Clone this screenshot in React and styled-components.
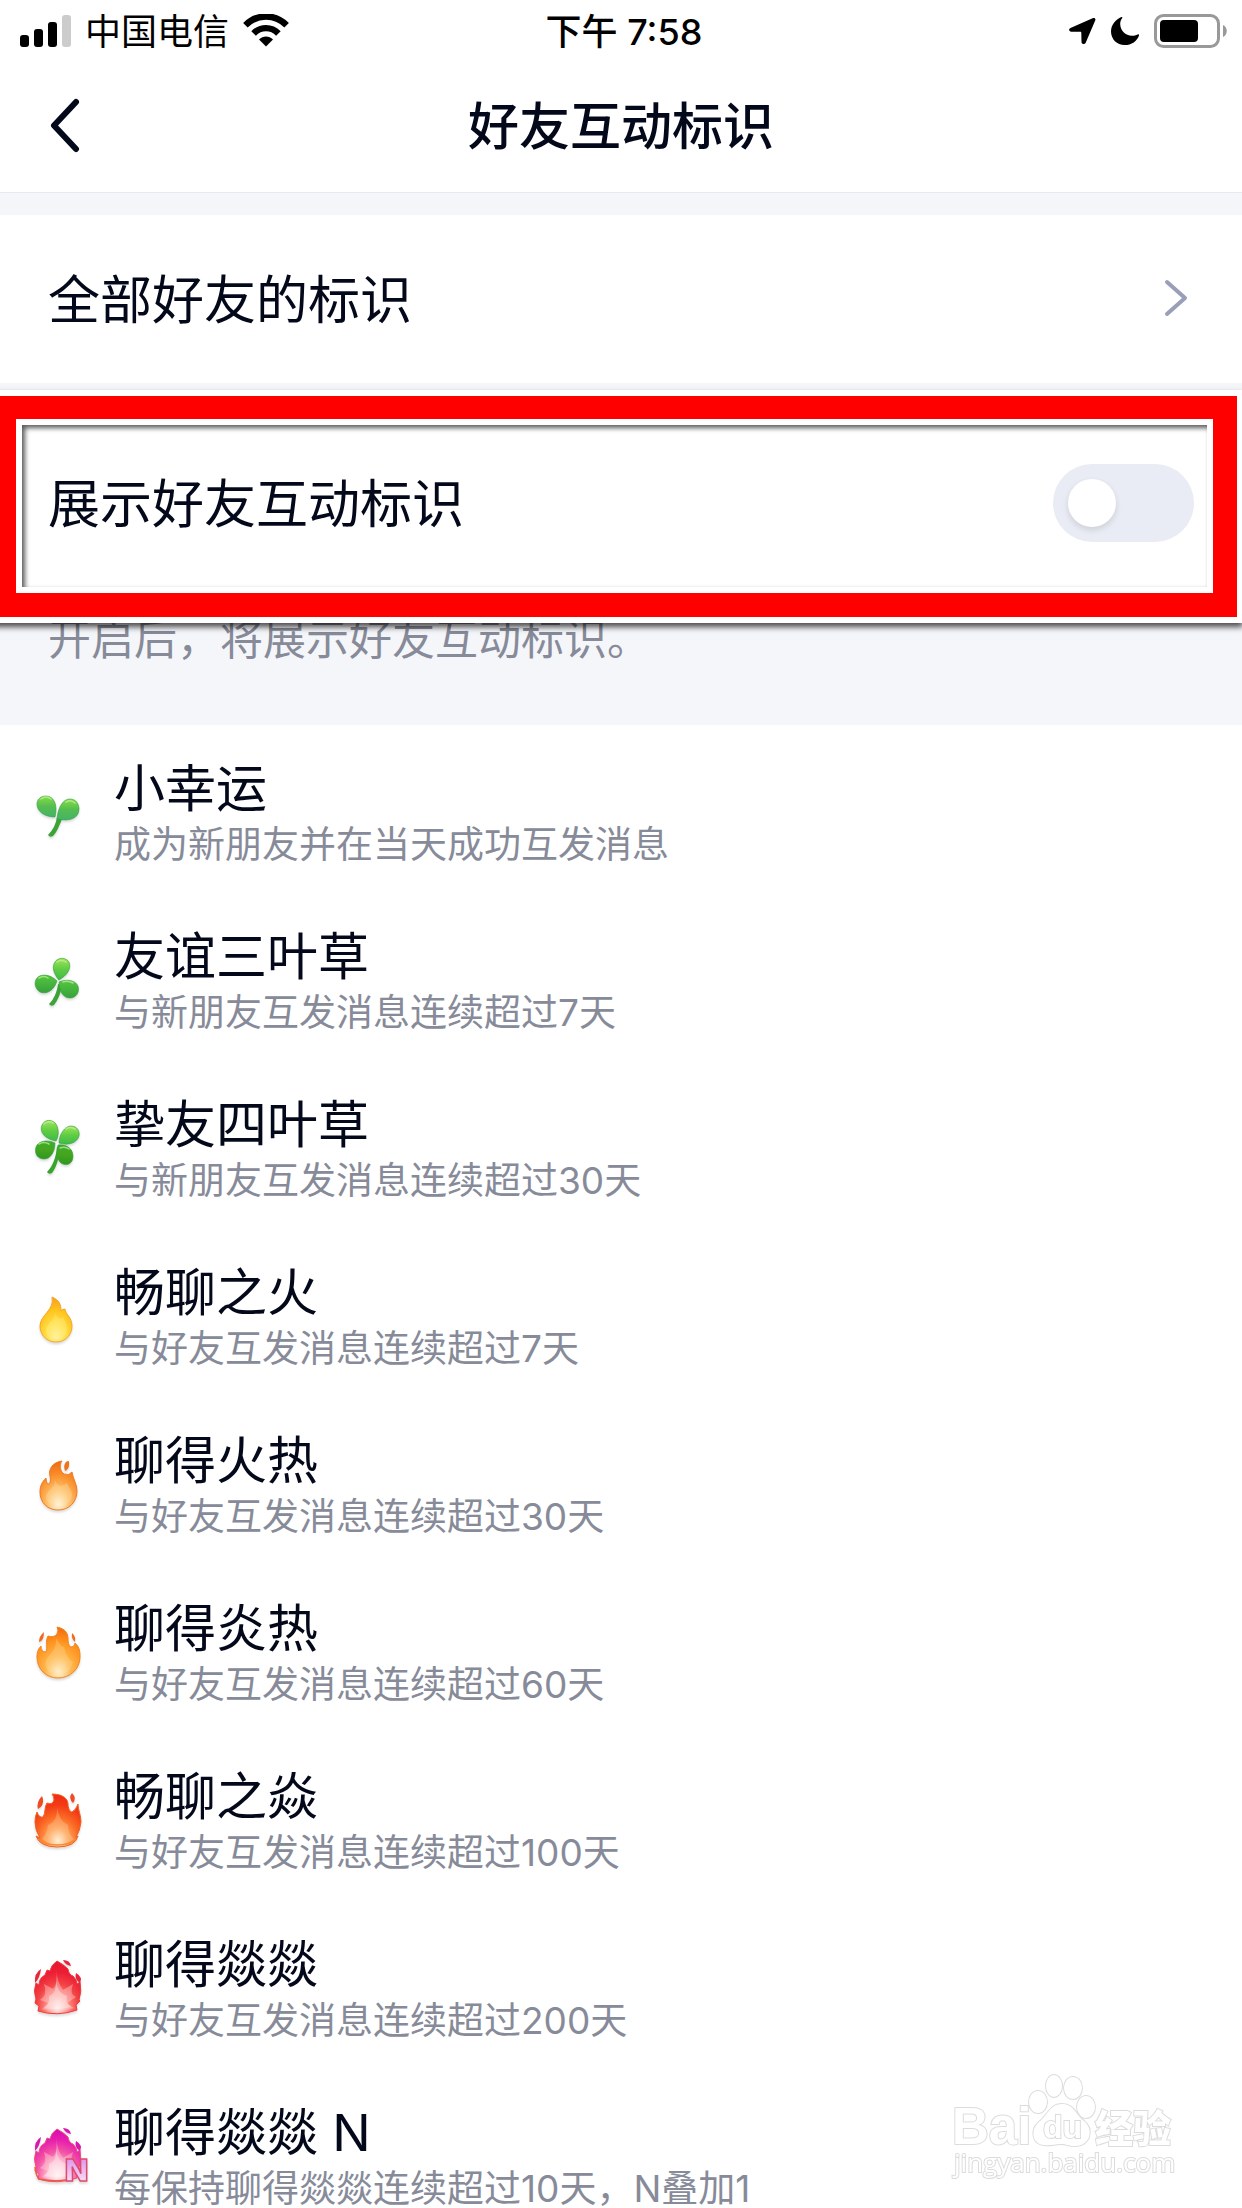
import React, { useState } from "react";
import styled, { createGlobalStyle } from "styled-components";

const GlobalStyle = createGlobalStyle`
  :root {
    --text-color: #03081a;
    --secondary-color: #878b99;
    --page-bg: #f5f6fa;
    --line-color: #e6e9f2;
    --switch-bg: #e9ecf4;
  }
  *, *::before {
    box-sizing: border-box;
  }
  body {
    margin: 0;
    background-color: #fff;
    color: var(--text-color);
    font-family: Inter, "Noto Sans CJK SC", sans-serif;
  }
  button, input {
    font: inherit;
    color: inherit;
  }
`;

const Screen = styled.div`
  height: 100vh;
  display: flex;
  flex-direction: column;
  overflow: hidden;
`;

const StatusBar = styled.div`
  height: 60px;
  flex-shrink: 0;
  display: grid;
  grid-template-columns: 1fr auto 1fr;
  align-items: center;
  padding: 0 14px 0 20px;
  font-size: 36px;
  line-height: 60px;
  color: #000;
`;

const StatusGroup = styled.div`
  display: flex;
  align-items: center;
  gap: 14px;
  justify-content: ${(props) => (props.$end ? "flex-end" : "flex-start")};

  svg {
    display: block;
  }
`;

const StatusText = styled.div`
  padding-top: 2px;
  font-weight: ${(props) => (props.$strong ? 500 : 400)};
`;

const Header = styled.header`
  height: 133px;
  flex-shrink: 0;
  display: grid;
  grid-template-columns: 84px 1fr 84px;
  align-items: center;
  border-bottom: 1px solid var(--line-color);
`;

const BackButton = styled.button`
  display: flex;
  justify-content: flex-end;
  padding: 0;
  border: none;
  background: none;
  cursor: pointer;
`;

const Title = styled.h1`
  margin: 0;
  padding-top: 2px;
  text-align: center;
  font-size: 51px;
  font-weight: 500;
  line-height: 60px;
`;

const Settings = styled.section`
  flex-shrink: 0;
  display: flex;
  flex-direction: column;
  gap: 36px;
  padding-top: 22px;
  background-color: var(--page-bg);
`;

const settingRow = `
  display: flex;
  align-items: center;
  justify-content: space-between;
  width: 100%;
  height: 168px;
  padding: 0 48px;
  background-color: #fff;
  font-size: 52px;
  line-height: 60px;

  & > span, & > label {
    padding-top: 3px;
  }
`;

const LinkRow = styled.a`
  ${settingRow}
  color: inherit;
  text-decoration: none;
`;

const SwitchRow = styled.div`
  ${settingRow}
  position: relative;
`;

const Switch = styled.input`
  appearance: none;
  flex-shrink: 0;
  width: 141px;
  height: 78px;
  margin: 0;
  padding: 15px;
  border-radius: 39px;
  background-color: ${(props) => (props.checked ? "#12b7f5" : "var(--switch-bg)")};
  cursor: pointer;

  &::before {
    content: "";
    display: block;
    width: 48px;
    height: 48px;
    margin-left: ${(props) => (props.checked ? "auto" : "0")};
    border-radius: 50%;
    background-color: #fff;
    box-shadow: 0 3px 6px rgba(0, 0, 0, 0.12);
  }
`;

const Marker = styled.div`
  position: absolute;
  z-index: 1;
  inset: -23px 5px -30px -8px;
  border: 24px solid #f00;
  border-top-width: 23px;
  box-shadow: 0 0 0 6px #fff, 0 4px 6px 6px rgba(0, 0, 0, 0.7);
  pointer-events: none;

  &::before {
    content: "";
    display: block;
    height: 100%;
    border: 6px solid #fff;
    box-shadow: inset 3px 3px 5px rgba(0, 0, 0, 0.65);
  }
`;

const Hint = styled.p`
  flex-shrink: 0;
  margin: 0;
  padding: 22px 48px 56px;
  background-color: var(--page-bg);
  color: var(--secondary-color);
  font-size: 43px;
  line-height: 60px;
`;

const BadgeList = styled.ul`
  flex: 1;
  min-height: 0;
  margin: 0;
  padding: 0;
  list-style: none;
  overflow-y: auto;
  scrollbar-width: none;
`;

const BadgeItem = styled.li`
  display: flex;
  gap: 24px;
  height: 168px;
  padding: 34px 30px 0;
`;

const BadgeIcon = styled.svg`
  flex-shrink: 0;
  width: 60px;
  height: 60px;
  margin-top: 22px;
  overflow: visible;
  filter: drop-shadow(0 2px 1px rgba(0, 0, 0, 0.14));
`;

const BadgeName = styled.div`
  font-size: 51px;
  line-height: 60px;
`;

const BadgeRule = styled.div`
  color: var(--secondary-color);
  font-size: 37px;
  line-height: 52px;
`;

const Watermark = styled.svg`
  position: fixed;
  right: 60px;
  bottom: 20px;
  width: 236px;
  height: 120px;
  pointer-events: none;
`;

function SignalIcon() {
  return (
    <svg width="51" height="34" viewBox="0 0 51 34">
      <rect x="0" y="21" width="9" height="12" rx="3" />
      <rect x="14" y="15" width="9" height="18" rx="3" />
      <rect x="28" y="8" width="9" height="25" rx="3" />
      <rect x="42" y="1" width="9" height="32" rx="3" fill="#ccc" />
    </svg>
  );
}

function WifiIcon() {
  return (
    <svg width="46" height="34" viewBox="0 0 46 34">
      <g fill="none" stroke="#000" strokeWidth="6.4">
        <path d="M2.4 11.2C14 -.4 32 -.4 43.6 11.2" />
        <path d="M10.6 19.4C17.6 12.4 28.4 12.4 35.4 19.4" />
      </g>
      <path d="M16 25.4C20 21.4 26 21.4 30 25.4L23 32.4Z" />
    </svg>
  );
}

function LocationIcon() {
  return (
    <svg width="27" height="28" viewBox="0 0 27 28">
      <path d="M23.600 1.300C25.600.300 27 1.600 26.200 3.600L16.800 25.600C15.900 27.900 12.600 27.400 12.500 24.900L12.300 15.700C12.300 15 12 14.800 11.400 14.800L2.300 14.700C-.200 14.600-.600 11.900 1.500 10.900Z" />
    </svg>
  );
}

function MoonIcon() {
  return (
    <svg width="30" height="30" viewBox="0 0 30 30">
      <path d="M11.400 1C6 3 1 8.600 1 15.400C1 23 7 29 14.600 29C21.600 29 27.200 25 29 19.400C29.200 18.600 28.500 18 27.700 18.400C26 19.300 24 19.700 22 19.700C15.400 19.700 10.200 14.500 10.200 8C10.200 5.600 11 3.600 12.200 2C12.600 1.300 12.100.800 11.400 1Z" />
    </svg>
  );
}

function BatteryIcon() {
  return (
    <svg width="74" height="34" viewBox="0 0 74 34">
      <rect x="1.500" y="1.500" width="63" height="31" rx="8" fill="none" stroke="#999" strokeWidth="3" />
      <rect x="6" y="6" width="38" height="22" rx="4" />
      <path d="M69 11C74 13 74 21 69 23Z" fill="#999" />
    </svg>
  );
}

function Leaf({ d, fill, shine }) {
  return (
    <>
      <path d={d} fill={`url(#${fill})`} stroke="#2f9e3c" strokeOpacity="0.6" />
      <path d={shine} fill="none" stroke="#c4f29a" strokeOpacity="0.7" strokeWidth="1.500" strokeLinecap="round" />
    </>
  );
}

function TwoLeaf() {
  return (
    <>
      <path d="M27 36L32 38C29 46 26 52 23 55Q20 57 18 54C23 49 26 43 27 36Z" fill="#3da336" />
      <Leaf fill="leaf" shine="M11 18Q16 14 21 18" d="M25 36C14 36 7 30 7 23C7 18 11 15 16 15C24 15 28 24 25 36Z" />
      <Leaf fill="leaf" shine="M36 21Q41 18 45 22" d="M27 38C28 26 33 18 40 18C46 18 49 23 49 28C49 37 40 41 27 38Z" />
    </>
  );
}

function ThreeLeaf() {
  return (
    <>
      <path d="M28 35L32 36C31 44 28 51 24 56Q21 58 19 55C24 50 27 43 28 35Z" fill="#3da336" />
      <Leaf fill="leafLight" shine="M27 13Q31 10 36 13" d="M29 31C23 24 22 17 25 13C28 8 36 8 39 13C42 20 36 27 29 31Z" />
      <Leaf fill="leafMid" shine="M9 29Q14 26 18 29" d="M27 32C20 25 12 25 8 28C3 32 5 40 10 43C17 46 24 41 27 32Z" />
      <Leaf fill="leafMid" shine="M33 33Q38 31 43 34" d="M29 33C38 29 46 32 48 37C50 43 46 49 40 49C33 49 29 42 29 33Z" />
    </>
  );
}

function FourLeaf() {
  return (
    <>
      <path d="M27 30L30 31C29 40 27 50 22 56Q19 58 17 55C23 49 26 40 27 30Z" fill="#37a52b" />
      <Leaf fill="leafLight" shine="M14 7Q18 3 23 6" d="M26 24C15 22 9 15 12 8C15 2 22 2 26 7C29 12 29 19 26 24Z" />
      <Leaf fill="leafLight" shine="M36 12Q40 9 45 12" d="M29 26C29 17 35 9 41 9C47 9 50 14 49 19C47 26 38 29 29 26Z" />
      <Leaf fill="leafDark" shine="M9 27Q14 24 19 27" d="M25 26C17 22 8 24 6 30C4 37 8 42 14 42C21 42 25 34 25 26Z" />
      <Leaf fill="leafDark" shine="M30 31Q35 29 39 32" d="M28 28C37 27 43 32 43 39C43 46 38 49 33 47C27 45 26 36 28 28Z" />
    </>
  );
}

function YellowFlame() {
  return (
    <>
      <path d="M22 12C29 15 31 19 31 26Q32 24 35 24C35 29 42 32 42 41C42 50 35 57 26 57C17 57 10 50 10 41C10 30 25 25 22 12Z" fill="url(#fireYellow)" stroke="#f5a524" />
      <path d="M25 28C25 36 16 38 16 45C16 51 20 54 26 54C33 54 37 50 37 44C37 39 34 35 33 32C31 35 27 34 25 28Z" fill="#fff59b" opacity="0.3" />
    </>
  );
}

function OrangeFlame() {
  return (
    <>
      <path d="M32 8C23 9 18 16 20 23C21 28 20 31 18 31Q16 30 16 25C12 29 10 33 10 39C10 50 18 57 28 57C39 57 47 49 47 38C47 31 43 26 42 19Q39 23 34 21C30 18 29 12 32 8Z" fill="url(#fireOrange)" stroke="#f07b21" />
      <path d="M36 9Q40 6 39 12Q39 16 35 18Q33 12 36 9Z" fill="#ec741c" />
      <path d="M25 27C26 34 16 38 16 44C17 50 21 54 28 54C36 54 42 48 42 42C42 37 38 34 37 30C33 34 27 34 25 27Z" fill="#ffe9bb" opacity="0.3" />
    </>
  );
}

function DoubleFlame() {
  return (
    <>
      <path d="M27 6C37 8 38 14 38 18C38 22 39 26 42 26Q45 25 45 22C50 26 50 32 50 36C50 48 40 57 28 57C16 57 7 48 7 36C7 30 9 27 11 25Q11 31 16 31C18 27 15 20 18 15Q24 17 27 13Q29 9 27 6Z" fill="url(#fireDeep)" stroke="#f18420" />
      <path d="M14 11Q9 15 9 21Q14 20 14 11ZM42 12Q41 18 45 21Q46 15 42 12Z" fill="#f06b21" />
      <path d="M26 17C27 31 18 33 15 42Q18 54 28 54Q40 53 43 41Q37 39 34 26Q31 26 26 17Z" fill="#ffe2a6" opacity="0.3" />
    </>
  );
}

function RedFlame() {
  return (
    <>
      <path d="M22 5C33 5 38 10 38 15C38 19 40 23 42 23Q46 21 48 15C48 21 51 26 51 33Q50 42 46 48L48 47Q45 58 27 58Q10 58 6 47L10 49Q5 41 5 33Q5 27 7 23Q9 29 13 28C16 24 14 18 17 14Q23 16 24 11Q24 7 22 5Z" fill="url(#fireRed)" stroke="#f2601f" />
      <path d="M12 7Q6 13 8 20Q14 17 13 10ZM42 4Q38 9 43 14Q47 9 42 4Z" fill="#ef4c24" />
      <path d="M27 18Q28 32 18 36Q17 45 12 50Q19 55 28 55Q38 55 44 50Q38 45 38 36Q29 32 27 18Z" fill="#ffd9a8" opacity="0.3" />
      <path d="M8 50Q15 56 27 56Q40 56 46 50" fill="none" stroke="#f98a2c" strokeWidth="1.500" />
    </>
  );
}

function BigFlame({ fill, edge, drops }) {
  return (
    <>
      <path d="M27 4Q33 7 38 12Q39 18 43 19Q47 23 47 27L50 25Q52 34 49 43L50 44L46 48L47 53Q27 60 8 54L9 49L5 46L6 42Q3 34 6 26L9 28Q9 21 15 18L17 13L20 14Q21 8 27 4Z" fill={`url(#${fill})`} stroke={edge} />
      <path d="M11 12Q4 16 5 26Q10 21 11 12ZM33 3Q35 8 41 9Q40 3 33 3Z" fill={drops} />
      <path d="M46 16Q44 22 50 26Q53 20 46 16Z" fill={drops} />
      <path d="M26 12Q28 27 23 32L14 27Q18 38 10 43L18 46L12 52Q28 57 44 51L37 46L46 40Q39 38 43 27L33 33Q27 25 26 12Z" fill="#ffd9dc" opacity="0.4" />
      <path d="M26 24Q27 36 19 39Q20 47 14 51Q28 54 41 50Q35 46 37 39Q28 37 26 24Z" fill="#fff" opacity="0.35" />
    </>
  );
}

function NFlame() {
  return (
    <>
      <BigFlame fill="firePink" edge="#ee4f7a" drops="#d818ae" />
      <path d="M5 42Q6 51 9 54Q24 57 36 55" fill="none" stroke="#ef5a3b" strokeWidth="1.500" />
      <text x="35" y="56" fontFamily="Inter, sans-serif" fontSize="30" fontWeight="900" fill="url(#letterPink)" stroke="#dd4b6e" strokeWidth="1.500">
        N
      </text>
    </>
  );
}

function Gradient({ id, stops }) {
  return (
    <linearGradient id={id} x1="0" y1="0" x2="0" y2="1">
      {stops.map((color, i) => (
        <stop key={color} offset={i / (stops.length - 1)} stopColor={color} />
      ))}
    </linearGradient>
  );
}

// hot core at the foot of the flame, colour at the rim
function Glow({ id, stops }) {
  return (
    <radialGradient id={id} cx="0.5" cy="0.88" r="0.9" fx="0.5" fy="0.88">
      {stops.map((color, i) => (
        <stop key={color} offset={i / (stops.length - 1)} stopColor={color} />
      ))}
    </radialGradient>
  );
}

function GradientDefs() {
  return (
    <svg width="0" height="0" style={{ position: "absolute" }} aria-hidden="true">
      <defs>
        <Gradient id="leaf" stops={["#86dd48", "#55bd50", "#43b368"]} />
        <Gradient id="leafLight" stops={["#a0e45c", "#60cd43", "#3ebb49"]} />
        <Gradient id="leafMid" stops={["#55c73e", "#36a13c"]} />
        <Gradient id="leafDark" stops={["#3bae30", "#45a51d", "#2d9820"]} />
        <Glow id="fireYellow" stops={["#fff09a", "#ffdf48", "#ffc31c", "#f79a1c"]} />
        <Glow id="fireOrange" stops={["#fff6e2", "#ffc069", "#f98f2b", "#ec6512"]} />
        <Glow id="fireDeep" stops={["#fff3d6", "#ffb74e", "#ff941e", "#f2650d"]} />
        <Glow id="fireRed" stops={["#fff8ea", "#ffa35c", "#fb6a24", "#f33a15", "#f02a12"]} />
        <Glow id="fireCrimson" stops={["#fff5f2", "#ff8f86", "#f34344", "#ec1d35", "#e8152f"]} />
        <Glow id="firePink" stops={["#ffffff", "#ffb3cd", "#f456a4", "#e61fae", "#d909b4"]} />
        <Gradient id="letterPink" stops={["#d583ea", "#fff0f6"]} />
      </defs>
    </svg>
  );
}

const badges = [
  { name: "小幸运", rule: "成为新朋友并在当天成功互发消息", icon: <TwoLeaf /> },
  { name: "友谊三叶草", rule: "与新朋友互发消息连续超过7天", icon: <ThreeLeaf /> },
  { name: "挚友四叶草", rule: "与新朋友互发消息连续超过30天", icon: <FourLeaf /> },
  { name: "畅聊之火", rule: "与好友互发消息连续超过7天", icon: <YellowFlame /> },
  { name: "聊得火热", rule: "与好友互发消息连续超过30天", icon: <OrangeFlame /> },
  { name: "聊得炎热", rule: "与好友互发消息连续超过60天", icon: <DoubleFlame /> },
  { name: "畅聊之焱", rule: "与好友互发消息连续超过100天", icon: <RedFlame /> },
  {
    name: "聊得燚燚",
    rule: "与好友互发消息连续超过200天",
    icon: <BigFlame fill="fireCrimson" edge="#ef3a3a" drops="#e9243c" />,
  },
  { name: "聊得燚燚 N", rule: "每保持聊得燚燚连续超过10天，N叠加1", icon: <NFlame /> },
];

function BaiduWatermark() {
  return (
    <Watermark viewBox="0 0 236 120" aria-hidden="true">
      <g fill="#fff" stroke="#dcdcdc" strokeWidth="2" paintOrder="stroke">
        <ellipse cx="92" cy="34" rx="9" ry="11" />
        <ellipse cx="108" cy="18" rx="8" ry="11" />
        <ellipse cx="127" cy="20" rx="9" ry="11" />
        <ellipse cx="140" cy="39" rx="9" ry="11" />
        <path d="M116 36C128 36 129 46 138 53C149 62 143 78 130 78C121 78 121 76 115 76C108 76 105 78 98 77C86 76 84 62 93 54C102 47 104 36 116 36Z" />
        <text x="6" y="76" fontFamily="Liberation Sans, sans-serif" fontSize="51" fontWeight="700">
          Bai
        </text>
        <text x="97" y="70" fontFamily="Liberation Sans, sans-serif" fontSize="32" fontWeight="700">
          du
        </text>
        <text x="149" y="74" fontFamily="Noto Sans CJK SC, sans-serif" fontSize="38" fontWeight="900">
          经验
        </text>
        <text x="8" y="104" fontFamily="Open Sans, sans-serif" fontSize="26">
          jingyan.baidu.com
        </text>
      </g>
    </Watermark>
  );
}

function App() {
  const [isShown, setIsShown] = useState(false);
  return (
    <Screen>
      <GlobalStyle />
      <GradientDefs />
      <StatusBar>
        <StatusGroup>
          <SignalIcon />
          <StatusText>中国电信</StatusText>
          <WifiIcon />
        </StatusGroup>
        <StatusText $strong>下午 7:58</StatusText>
        <StatusGroup $end>
          <LocationIcon />
          <MoonIcon />
          <BatteryIcon />
        </StatusGroup>
      </StatusBar>

      <Header>
        <BackButton type="button" aria-label="返回">
          <svg width="34" height="56" viewBox="0 0 34 56" fill="none" stroke="#03081a" strokeWidth="6" strokeLinecap="round" strokeLinejoin="round">
            <path d="M26 4L4 27.500L26 51" />
          </svg>
        </BackButton>
        <Title>好友互动标识</Title>
      </Header>

      <Settings>
        <LinkRow href="#all">
          <span>全部好友的标识</span>
          <svg width="30" height="40" viewBox="0 0 30 40" fill="none" stroke="#999fb8" strokeWidth="4" strokeLinecap="round" strokeLinejoin="round">
            <path d="M3 3L21 19L3 35" />
          </svg>
        </LinkRow>
        <SwitchRow>
          <label htmlFor="show-badges">展示好友互动标识</label>
          <Switch
            type="checkbox"
            role="switch"
            id="show-badges"
            checked={isShown}
            onChange={(e) => setIsShown(e.target.checked)}
          />
          <Marker />
        </SwitchRow>
      </Settings>
      <Hint>开启后，将展示好友互动标识。</Hint>

      <BadgeList>
        {badges.map((badge) => (
          <BadgeItem key={badge.name}>
            <BadgeIcon viewBox="0 0 60 60" aria-hidden="true">
              {badge.icon}
            </BadgeIcon>
            <div>
              <BadgeName>{badge.name}</BadgeName>
              <BadgeRule>{badge.rule}</BadgeRule>
            </div>
          </BadgeItem>
        ))}
      </BadgeList>
      <BaiduWatermark />
    </Screen>
  );
}

export default App;
